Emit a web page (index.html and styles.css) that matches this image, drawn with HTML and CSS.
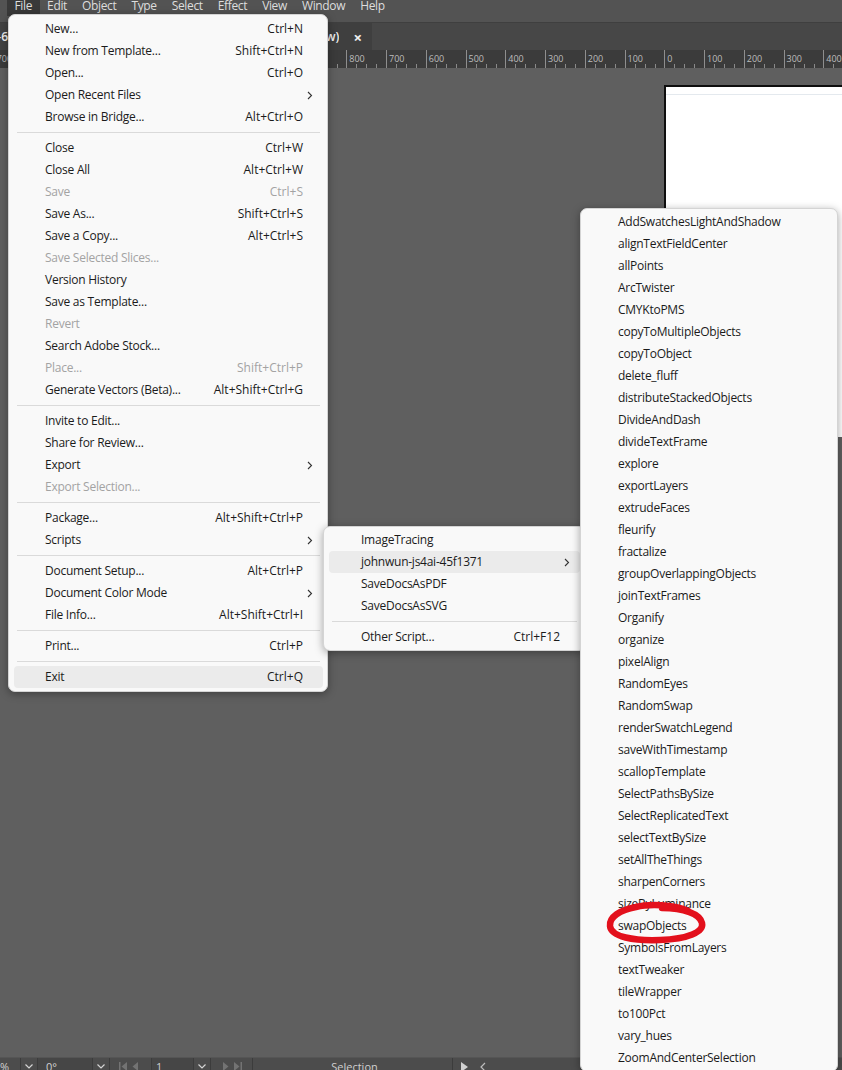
FILE: index.html
```html
<!DOCTYPE html>
<html lang="en">
<head>
    <meta charset="UTF-8">
    <title>Illustrator - File &gt; Scripts</title>
    <link rel="stylesheet" href="styles.css">
</head>
<body>
    <div class="app">
        <div class="menubar">
            <span class="mb-item active">File</span>
            <span class="mb-item">Edit</span>
            <span class="mb-item">Object</span>
            <span class="mb-item">Type</span>
            <span class="mb-item">Select</span>
            <span class="mb-item">Effect</span>
            <span class="mb-item">View</span>
            <span class="mb-item">Window</span>
            <span class="mb-item">Help</span>
        </div>

        <div class="tabbar">
            <div class="tab tab-prev"><span class="tab-title">Untitled-6</span></div>
            <div class="tab tab-current">
                <span class="tab-title">Untitled-2 @ 150 % (RGB/Preview)</span>
                <span class="tab-close">&times;</span>
            </div>
        </div>

        <div class="ruler">
            <div class="ruler-track">
                <span class="tick-cell">1700</span>
                <span class="tick-cell">1600</span>
                <span class="tick-cell">1500</span>
                <span class="tick-cell">1400</span>
                <span class="tick-cell">1300</span>
                <span class="tick-cell">1200</span>
                <span class="tick-cell">1100</span>
                <span class="tick-cell">1000</span>
                <span class="tick-cell">900</span>
                <span class="tick-cell">800</span>
                <span class="tick-cell">700</span>
                <span class="tick-cell">600</span>
                <span class="tick-cell">500</span>
                <span class="tick-cell">400</span>
                <span class="tick-cell">300</span>
                <span class="tick-cell">200</span>
                <span class="tick-cell">100</span>
                <span class="tick-cell">0</span>
                <span class="tick-cell">100</span>
                <span class="tick-cell">200</span>
                <span class="tick-cell">300</span>
                <span class="tick-cell">400</span>
                <span class="tick-cell">500</span>
            </div>
        </div>

        <div class="canvas">
            <div class="artboard"><div class="artboard-edge"></div></div>
        </div>

        <div class="statusbar">
            <span class="sb-cell sb-zoom">66.67%</span>
            <span class="sb-cell sb-drop">
                <svg width="8" height="5" viewBox="0 0 8 5"><polyline points="0.5,0.5 4,4 7.5,0.5" fill="none" stroke="#d4d4d4" stroke-width="1.2"/></svg>
            </span>
            <span class="sb-cell sb-field sb-angle">0°</span>
            <span class="sb-cell sb-drop">
                <svg width="8" height="5" viewBox="0 0 8 5"><polyline points="0.5,0.5 4,4 7.5,0.5" fill="none" stroke="#d4d4d4" stroke-width="1.2"/></svg>
            </span>
            <span class="sb-cell sb-nav">
                <svg width="22" height="9" viewBox="0 0 22 9"><rect x="0" y="0" width="1.5" height="9" fill="#737373"/><polygon points="8,0 2.5,4.5 8,9" fill="#737373"/><polygon points="19,0 13.5,4.5 19,9" fill="#737373"/></svg>
            </span>
            <span class="sb-cell sb-field sb-page">1</span>
            <span class="sb-cell sb-drop">
                <svg width="8" height="5" viewBox="0 0 8 5"><polyline points="0.5,0.5 4,4 7.5,0.5" fill="none" stroke="#d4d4d4" stroke-width="1.2"/></svg>
            </span>
            <span class="sb-cell sb-nav">
                <svg width="22" height="9" viewBox="0 0 22 9"><polygon points="3,0 8.5,4.5 3,9" fill="#737373"/><polygon points="14,0 19.5,4.5 14,9" fill="#737373"/><rect x="20.5" y="0" width="1.5" height="9" fill="#737373"/></svg>
            </span>
            <span class="sb-cell sb-tool">Selection</span>
            <span class="sb-cell sb-more">
                <svg width="7" height="10" viewBox="0 0 7 10"><polygon points="0,0 7,5 0,10" fill="#d0d0d0"/></svg>
                <svg width="6" height="10" viewBox="0 0 6 10"><polyline points="5,1 1,5 5,9" fill="none" stroke="#bdbdbd" stroke-width="1.2"/></svg>
            </span>
        </div>
    </div>

    <!-- File menu -->
    <div class="menu menu-file">
        <div class="mi"><span>New...</span><span class="key">Ctrl+N</span></div>
        <div class="mi"><span>New from Template...</span><span class="key">Shift+Ctrl+N</span></div>
        <div class="mi"><span>Open...</span><span class="key">Ctrl+O</span></div>
        <div class="mi"><span>Open Recent Files</span><span class="key"></span><span class="arrow"><svg width="6" height="9" viewBox="0 0 6 9"><polyline points="1,1 4.5,4.5 1,8" fill="none" stroke="#333" stroke-width="1.1"/></svg></span></div>
        <div class="mi"><span>Browse in Bridge...</span><span class="key">Alt+Ctrl+O</span></div>
        <div class="sep"></div>
        <div class="mi"><span>Close</span><span class="key">Ctrl+W</span></div>
        <div class="mi"><span>Close All</span><span class="key">Alt+Ctrl+W</span></div>
        <div class="mi disabled"><span>Save</span><span class="key">Ctrl+S</span></div>
        <div class="mi"><span>Save As...</span><span class="key">Shift+Ctrl+S</span></div>
        <div class="mi"><span>Save a Copy...</span><span class="key">Alt+Ctrl+S</span></div>
        <div class="mi disabled"><span>Save Selected Slices...</span><span class="key"></span></div>
        <div class="mi"><span>Version History</span><span class="key"></span></div>
        <div class="mi"><span>Save as Template...</span><span class="key"></span></div>
        <div class="mi disabled"><span>Revert</span><span class="key"></span></div>
        <div class="mi"><span>Search Adobe Stock...</span><span class="key"></span></div>
        <div class="mi disabled"><span>Place...</span><span class="key">Shift+Ctrl+P</span></div>
        <div class="mi"><span>Generate Vectors (Beta)...</span><span class="key">Alt+Shift+Ctrl+G</span></div>
        <div class="sep"></div>
        <div class="mi"><span>Invite to Edit...</span><span class="key"></span></div>
        <div class="mi"><span>Share for Review...</span><span class="key"></span></div>
        <div class="mi"><span>Export</span><span class="key"></span><span class="arrow"><svg width="6" height="9" viewBox="0 0 6 9"><polyline points="1,1 4.5,4.5 1,8" fill="none" stroke="#333" stroke-width="1.1"/></svg></span></div>
        <div class="mi disabled"><span>Export Selection...</span><span class="key"></span></div>
        <div class="sep"></div>
        <div class="mi"><span>Package...</span><span class="key">Alt+Shift+Ctrl+P</span></div>
        <div class="mi"><span>Scripts</span><span class="key"></span><span class="arrow"><svg width="6" height="9" viewBox="0 0 6 9"><polyline points="1,1 4.5,4.5 1,8" fill="none" stroke="#333" stroke-width="1.1"/></svg></span></div>
        <div class="sep"></div>
        <div class="mi"><span>Document Setup...</span><span class="key">Alt+Ctrl+P</span></div>
        <div class="mi"><span>Document Color Mode</span><span class="key"></span><span class="arrow"><svg width="6" height="9" viewBox="0 0 6 9"><polyline points="1,1 4.5,4.5 1,8" fill="none" stroke="#333" stroke-width="1.1"/></svg></span></div>
        <div class="mi"><span>File Info...</span><span class="key">Alt+Shift+Ctrl+I</span></div>
        <div class="sep"></div>
        <div class="mi"><span>Print...</span><span class="key">Ctrl+P</span></div>
        <div class="sep"></div>
        <div class="mi hover"><span>Exit</span><span class="key">Ctrl+Q</span></div>
    </div>

    <!-- Scripts submenu -->
    <div class="menu menu-scripts">
        <div class="mi"><span>ImageTracing</span><span class="key"></span></div>
        <div class="mi hover"><span>johnwun-js4ai-45f1371</span><span class="key"></span><span class="arrow"><svg width="6" height="9" viewBox="0 0 6 9"><polyline points="1,1 4.5,4.5 1,8" fill="none" stroke="#333" stroke-width="1.1"/></svg></span></div>
        <div class="mi"><span>SaveDocsAsPDF</span><span class="key"></span></div>
        <div class="mi"><span>SaveDocsAsSVG</span><span class="key"></span></div>
        <div class="sep"></div>
        <div class="mi"><span>Other Script...</span><span class="key">Ctrl+F12</span></div>
    </div>

    <!-- johnwun-js4ai folder -->
    <div class="menu menu-folder">
        <div class="mi"><span>AddSwatchesLightAndShadow</span></div>
        <div class="mi"><span>alignTextFieldCenter</span></div>
        <div class="mi"><span>allPoints</span></div>
        <div class="mi"><span>ArcTwister</span></div>
        <div class="mi"><span>CMYKtoPMS</span></div>
        <div class="mi"><span>copyToMultipleObjects</span></div>
        <div class="mi"><span>copyToObject</span></div>
        <div class="mi"><span>delete_fluff</span></div>
        <div class="mi"><span>distributeStackedObjects</span></div>
        <div class="mi"><span>DivideAndDash</span></div>
        <div class="mi"><span>divideTextFrame</span></div>
        <div class="mi"><span>explore</span></div>
        <div class="mi"><span>exportLayers</span></div>
        <div class="mi"><span>extrudeFaces</span></div>
        <div class="mi"><span>fleurify</span></div>
        <div class="mi"><span>fractalize</span></div>
        <div class="mi"><span>groupOverlappingObjects</span></div>
        <div class="mi"><span>joinTextFrames</span></div>
        <div class="mi"><span>Organify</span></div>
        <div class="mi"><span>organize</span></div>
        <div class="mi"><span>pixelAlign</span></div>
        <div class="mi"><span>RandomEyes</span></div>
        <div class="mi"><span>RandomSwap</span></div>
        <div class="mi"><span>renderSwatchLegend</span></div>
        <div class="mi"><span>saveWithTimestamp</span></div>
        <div class="mi"><span>scallopTemplate</span></div>
        <div class="mi"><span>SelectPathsBySize</span></div>
        <div class="mi"><span>SelectReplicatedText</span></div>
        <div class="mi"><span>selectTextBySize</span></div>
        <div class="mi"><span>setAllTheThings</span></div>
        <div class="mi"><span>sharpenCorners</span></div>
        <div class="mi"><span>sizeByLuminance</span></div>
        <div class="mi"><span>swapObjects</span></div>
        <div class="mi"><span>SymbolsFromLayers</span></div>
        <div class="mi"><span>textTweaker</span></div>
        <div class="mi"><span>tileWrapper</span></div>
        <div class="mi"><span>to100Pct</span></div>
        <div class="mi"><span>vary_hues</span></div>
        <div class="mi"><span>ZoomAndCenterSelection</span></div>
    </div>

    <!-- hand-drawn highlight -->
    <svg class="annotation" width="120" height="56" viewBox="0 0 120 56">
        <path d="M92 15 C78 8, 52 8, 40 11 C24 14, 13 21, 14 30 C15 41, 38 45, 64 44 C92 43, 108 36, 106 27 C104 18, 88 12, 66 12"
              fill="none" stroke="#e3101c" stroke-width="6.5" stroke-linecap="round" stroke-linejoin="round"/>
    </svg>
</body>
</html>
```

FILE: styles.css
```css
* {
    box-sizing: border-box;
}
html, body {
    margin: 0;
    padding: 0;
}
body {
    position: relative;
    width: 842px;
    height: 1070px;
    overflow: hidden;
    font-family: "Open Sans", "Noto Sans", sans-serif;
    background-color: #5f5f5f;
}
.app {
    display: flex;
    flex-direction: column;
    height: 1070px;
}

/* top menu bar */
.menubar {
    flex: none;
    display: flex;
    height: 23px;
    padding-left: 7px;
    background-color: #535353;
    border-bottom: 1px solid #3f3f3f;
    color: #dedede;
    font-size: 12px;
    letter-spacing: -0.35px;
}
.mb-item {
    height: 16px;
    padding: 0 7.5px;
    line-height: 12px;
}
.mb-item.active {
    background-color: #393939;
}

/* document tabs */
.tabbar {
    flex: none;
    display: flex;
    height: 27px;
    background-color: #474747;
    color: #f0f0f0;
    font-size: 12px;
    font-weight: 600;
}
.tab {
    display: flex;
    align-items: center;
    overflow: hidden;
    white-space: nowrap;
}
.tab-prev {
    width: 8px;
    justify-content: flex-end;
    background-color: #424242;
}
.tab-current {
    width: 364px;
    padding: 0 10px;
    background-color: #3f3f3f;
}
.tab-current .tab-title {
    flex: 1;
    text-align: right;
    overflow: hidden;
}
.tab-close {
    margin-left: 14px;
    font-size: 15px;
    font-weight: 700;
}

/* ruler */
.ruler {
    flex: none;
    height: 18px;
    overflow: hidden;
    background-color: #3b3b3b;
}
.ruler-track {
    display: flex;
    margin-left: -11.5px;
}
.tick-cell {
    flex: none;
    width: 39.75px;
    height: 18px;
    padding: 4px 0 0 2px;
    border-left: 1px solid #8e8e8e;
    font-size: 9px;
    line-height: 9px;
    color: #bdbdbd;
    background: repeating-linear-gradient(to right, transparent 0 9px, #8a8a8a 9px 10px) left bottom / 100% 4px no-repeat;
}

/* canvas + artboard */
.canvas {
    flex: none;
    height: 989px;
    padding: 17px 0 0 664px;
    background-color: #5f5f5f;
    overflow: hidden;
}
.artboard {
    width: 200px;
    height: 352px;
    background-color: #fff;
    border-top: 2px solid #0e0e0e;
    border-left: 2px solid #0e0e0e;
}
.artboard-edge {
    height: 8px;
    border-bottom: 1px solid #e4e9ee;
}

/* status bar */
.statusbar {
    flex: none;
    display: flex;
    height: 18px;
    background-color: #4c4c4c;
    border-top: 1px solid #555;
    color: #d0d0d0;
    font-size: 11px;
}
.sb-cell {
    flex: none;
    display: flex;
    align-items: center;
    height: 100%;
    border-right: 1px solid #3c3c3c;
    overflow: hidden;
    white-space: nowrap;
}
.sb-zoom {
    width: 21px;
    justify-content: flex-end;
    padding-right: 11px;
}
.sb-drop {
    width: 17px;
    justify-content: center;
}
.sb-field {
    background-color: #464646;
}
.sb-angle {
    width: 55px;
    padding-left: 8px;
}
.sb-nav {
    width: 42px;
    padding-left: 9px;
}
.sb-page {
    width: 42px;
    padding-left: 4px;
}
.sb-tool {
    width: 200px;
    justify-content: center;
    padding-left: 4px;
}
.sb-more {
    width: 121px;
    gap: 12px;
    padding-left: 8px;
    border-right: none;
}

/* menus */
.menu {
    position: absolute;
    background-color: #f9f9f9;
    border: 1px solid #d4d4d4;
    border-radius: 7px;
    box-shadow: 0 2px 8px rgba(0, 0, 0, 0.35);
    color: #1b1b1b;
    font-size: 12px;
    letter-spacing: -0.25px;
}
.menu-file {
    left: 8px;
    top: 14px;
    width: 320px;
    padding: 3px 4px 3px 5px;
    z-index: 1;
}
.menu-scripts {
    left: 323px;
    top: 526px;
    width: 263px;
    padding: 2px 5px;
    z-index: 2;
}
.menu-folder {
    left: 580px;
    top: 208px;
    width: 258px;
    padding: 2px 5px;
    z-index: 3;
}
.mi {
    display: grid;
    grid-template-columns: 1fr auto 20px;
    height: 22px;
    line-height: 22px;
    padding-left: 32px;
    border-radius: 4px;
    white-space: nowrap;
}
.menu-file .mi {
    padding-left: 31px;
}
.mi .key {
    word-spacing: 0;
    letter-spacing: 0;
}
.mi.disabled {
    color: #a3a3a3;
}
.mi.hover {
    background-color: #ebebeb;
}
.mi .arrow {
    display: flex;
    align-items: center;
    padding-left: 4px;
}
.sep {
    height: 1px;
    margin: 4px 3px;
    background-color: #dadada;
}

.annotation {
    position: absolute;
    left: 596px;
    top: 896px;
    z-index: 4;
}
```
